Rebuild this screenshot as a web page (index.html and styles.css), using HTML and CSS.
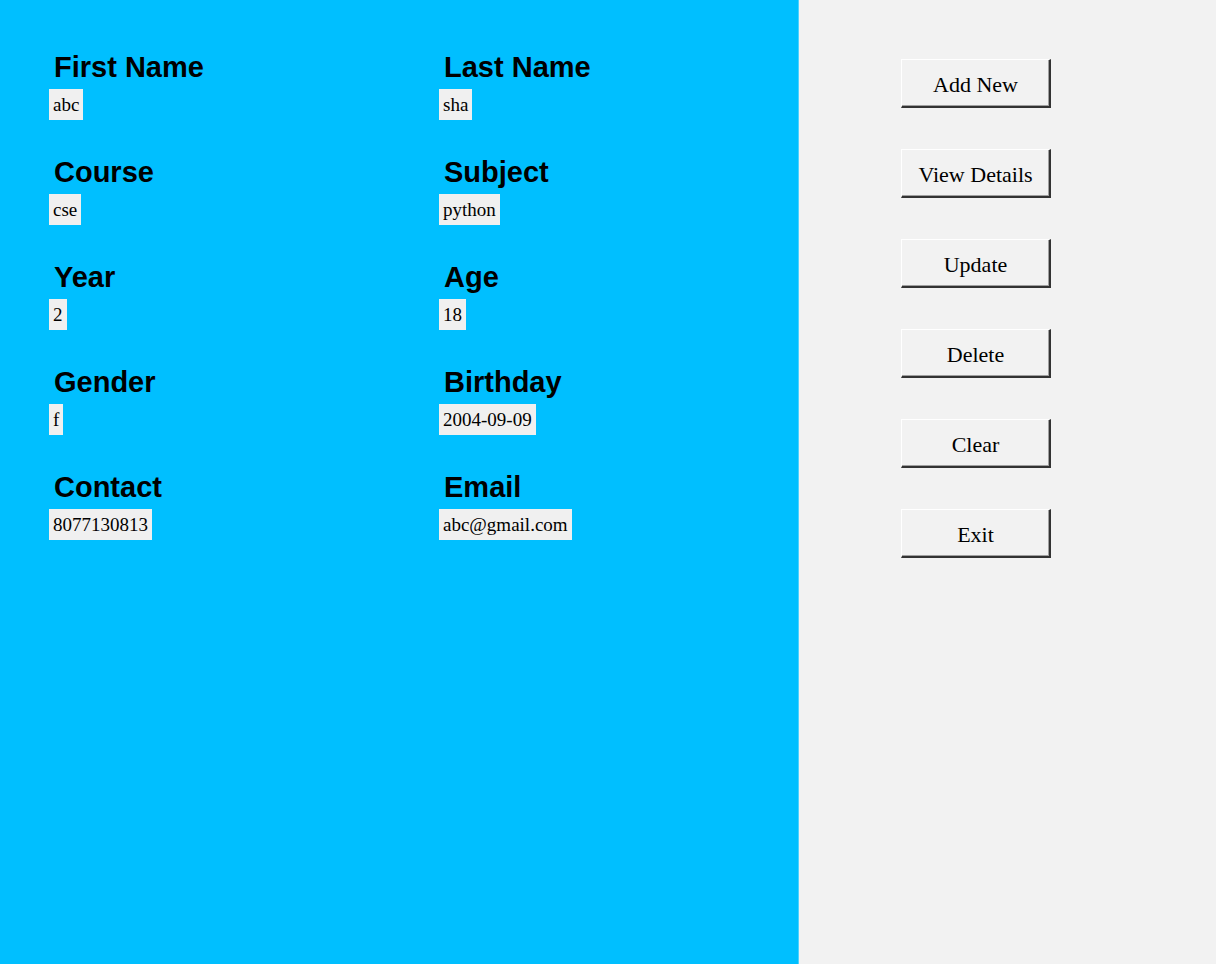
FILE: index.html
```html
<!DOCTYPE html>
<html>
<head>
<meta charset="utf-8">
<link rel="stylesheet" href="styles.css">
</head>
<body>
<div class="app">
  <div class="form">
    <div class="field"><div class="label">First Name</div><div class="value">abc</div></div>
    <div class="field"><div class="label">Last Name</div><div class="value">sha</div></div>
    <div class="field"><div class="label">Course</div><div class="value">cse</div></div>
    <div class="field"><div class="label">Subject</div><div class="value">python</div></div>
    <div class="field"><div class="label">Year</div><div class="value">2</div></div>
    <div class="field"><div class="label">Age</div><div class="value">18</div></div>
    <div class="field"><div class="label">Gender</div><div class="value">f</div></div>
    <div class="field"><div class="label">Birthday</div><div class="value">2004-09-09</div></div>
    <div class="field"><div class="label">Contact</div><div class="value">8077130813</div></div>
    <div class="field"><div class="label">Email</div><div class="value">abc@gmail.com</div></div>
  </div>
  <div class="actions">
    <button class="btn">Add New</button>
    <button class="btn">View Details</button>
    <button class="btn">Update</button>
    <button class="btn">Delete</button>
    <button class="btn">Clear</button>
    <button class="btn">Exit</button>
  </div>
</div>
</body>
</html>
```

FILE: styles.css
```css
html, body {
  margin: 0;
  padding: 0;
  height: 100%;
}
body {
  font-family: "Liberation Serif", "Times New Roman", serif;
  color: #000;
}
.app {
  display: flex;
  width: 1216px;
  height: 964px;
}
.form {
  background: #00bfff;
  border-right: 1px solid #4dd2ff;
  box-sizing: border-box;
  width: 799px;
  padding: 51px 0 0 49px;
  display: grid;
  grid-template-columns: 390px 360px;
  grid-auto-rows: 105px;
  align-content: start;
}
.field {
  display: flex;
  flex-direction: column;
  align-items: flex-start;
}
.label {
  font-family: "Liberation Sans", Arial, sans-serif;
  font-weight: bold;
  font-size: 29px;
  line-height: 33px;
  padding-left: 5px;
  margin-bottom: 5px;
}
.value {
  background: #f0f0f0;
  font-size: 19px;
  line-height: 22px;
  padding: 5px 4px 4px 4px;
  height: 22px;
}
.actions {
  flex: 1;
  background: #f2f2f2;
  display: flex;
  flex-direction: column;
  align-items: flex-start;
  padding: 59px 0 0 102px;
  gap: 41px;
}
.btn {
  width: 150px;
  height: 49px;
  background: #f2f2f2;
  font-family: "Liberation Serif", "Times New Roman", serif;
  font-size: 22px;
  color: #000;
  padding: 3px 0 0 0;
  margin: 0;
  border-style: solid;
  border-width: 1px 2px 2px 1px;
  border-color: #ffffff #333333 #333333 #ffffff;
  box-shadow: inset -1px -1px 0 #a0a0a0;
  box-sizing: border-box;
}
```
